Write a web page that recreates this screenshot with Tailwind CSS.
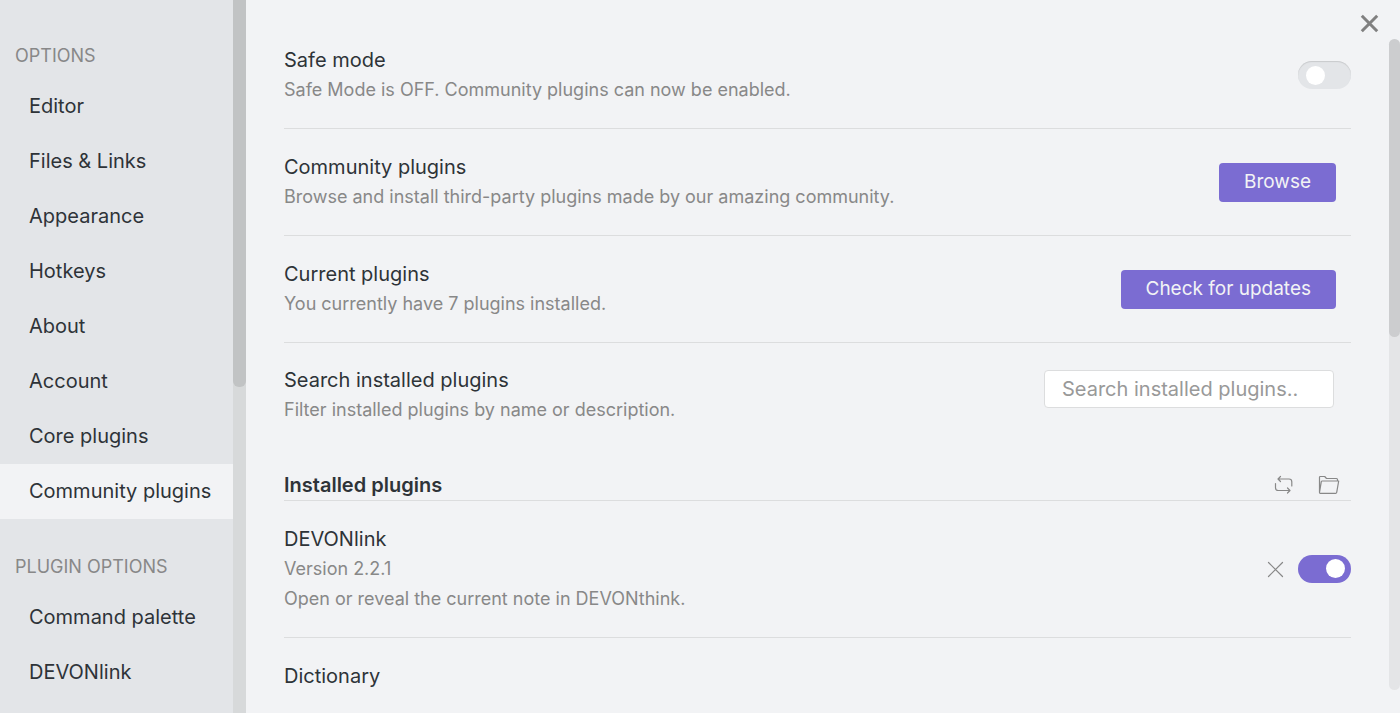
<!DOCTYPE html>
<html lang="en">
<head>
    <meta charset="UTF-8">
    <meta name="viewport" content="width=device-width, initial-scale=1.0">
    <title>Settings - Community plugins</title>
    <script src="https://cdn.jsdelivr.net/npm/@tailwindcss/browser@4"></script>
</head>
<body class="bg-[#f2f3f5] text-[#2e3338] font-[Inter,sans-serif] text-xl">
    <div class="flex h-screen overflow-hidden">
        <!-- Sidebar -->
        <aside class="flex shrink-0 bg-[#e3e5e8]">
            <nav class="w-[233px] pt-[41px] leading-[55px] whitespace-nowrap">
                <h2 class="pl-[15px] text-lg leading-[30px] text-[#888888] mb-2">OPTIONS</h2>
                <a href="#" class="block pl-[29px]">Editor</a>
                <a href="#" class="block pl-[29px]">Files &amp; Links</a>
                <a href="#" class="block pl-[29px]">Appearance</a>
                <a href="#" class="block pl-[29px]">Hotkeys</a>
                <a href="#" class="block pl-[29px]">About</a>
                <a href="#" class="block pl-[29px]">Account</a>
                <a href="#" class="block pl-[29px]">Core plugins</a>
                <a href="#" class="block pl-[29px] bg-[#f2f3f5]" aria-current="page">Community plugins</a>

                <h2 class="pl-[15px] text-lg leading-[30px] text-[#888888] mt-[33px] mb-2">PLUGIN OPTIONS</h2>
                <a href="#" class="block pl-[29px]">Command palette</a>
                <a href="#" class="block pl-[29px]">DEVONlink</a>
            </nav>
            <div class="w-[13px] bg-[#d7d9da]">
                <div class="h-[387px] rounded-b-md bg-[#c1c3c4]"></div>
            </div>
        </aside>

        <!-- Settings -->
        <main class="relative flex flex-1">
            <div class="flex-1 pl-[38px] pr-[38px] pt-[22px] leading-[30px]">
                <div class="flex items-center justify-between py-[23px]">
                    <div>
                        <h3 id="safe-label">Safe mode</h3>
                        <p class="text-lg leading-[30px] text-[#888888]">Safe Mode is OFF. Community plugins can now be enabled.</p>
                    </div>
                    <input type="checkbox" aria-labelledby="safe-label" class="appearance-none w-[53px] h-7 rounded-full bg-[#e3e5e8] shadow-[inset_0_1px_1px_#c8cacc] before:block before:size-[19px] before:rounded-full before:bg-white before:mt-[5px] before:ml-2 checked:bg-[#7b6cd2]">
                </div>

                <div class="flex items-center justify-between py-[23px] border-t border-[#dcddde]">
                    <div>
                        <h3>Community plugins</h3>
                        <p class="text-lg leading-[30px] text-[#888888]">Browse and install third-party plugins made by our amazing community.</p>
                    </div>
                    <button class="mr-[15px] h-[39px] px-[25px] rounded bg-[#7b6cd2] text-[19px] text-[#f2f3f5]">Browse</button>
                </div>

                <div class="flex items-center justify-between py-[23px] border-t border-[#dcddde]">
                    <div>
                        <h3>Current plugins</h3>
                        <p class="text-lg leading-[30px] text-[#888888]">You currently have 7 plugins installed.</p>
                    </div>
                    <button class="mr-[15px] h-[39px] px-[25px] rounded bg-[#7b6cd2] text-[19px] text-[#f2f3f5]">Check for updates</button>
                </div>

                <div class="flex items-start justify-between pt-[22px] border-t border-[#dcddde]">
                    <div>
                        <label for="plugin-search" class="block">Search installed plugins</label>
                        <p class="text-lg leading-[30px] text-[#888888]">Filter installed plugins by name or description.</p>
                    </div>
                    <input id="plugin-search" type="text" placeholder="Search installed plugins.." class="mt-[5px] mr-[17px] w-[290px] h-[38px] px-[17px] rounded border border-[#dcddde] bg-white placeholder:text-[#999999]">
                </div>

                <!-- Installed plugins -->
                <div class="flex items-center justify-between mt-[45px] border-b border-[#dcddde]">
                    <h3 class="font-semibold">Installed plugins</h3>
                    <div class="flex gap-6 pr-[11px] text-[#888888]">
                        <button aria-label="Reload plugins">
                            <svg class="block w-5 h-5" viewBox="0 0 20 20" fill="none" stroke="currentColor" stroke-width="1.2" stroke-linecap="round" stroke-linejoin="round">
                                <path d="M6.500 1.500 4 4l2.500 2.500M4 4h11q2.800 0 2.800 2.800V11M13.500 18l2.500-2.500-2.500-2.500M16 15.500H4.300Q1.500 15.500 1.500 12.700V8.500"/>
                            </svg>
                        </button>
                        <button aria-label="Open plugins folder">
                            <svg class="block w-[22px] h-5" viewBox="0 0 22 20" fill="none" stroke="currentColor" stroke-width="1.2" stroke-linejoin="round">
                                <path d="M1.500 17.500V2.200Q1.500 1.500 2.200 1.500H6.700L8.500 3.500H18.500Q19.500 3.500 19.500 4.500V6M1.500 17.500 3.300 6.700Q3.500 6 4.200 6H20.700L18.700 17.300Q18.500 18.300 17.600 18.300H2.200Q1.500 18.300 1.500 17.500"/>
                            </svg>
                        </button>
                    </div>
                </div>

                <div class="flex items-center justify-between py-[23px]">
                    <div>
                        <h3 id="devonlink-label">DEVONlink</h3>
                        <p class="text-lg leading-[30px] text-[#888888]">Version 2.2.1</p>
                        <p class="text-lg leading-[30px] text-[#888888]">Open or reveal the current note in DEVONthink.</p>
                    </div>
                    <div class="flex items-center gap-[14px]">
                        <button aria-label="Uninstall DEVONlink" class="text-[#888888]">
                            <svg class="block w-[17px] h-[17px]" viewBox="0 0 17 17" fill="none" stroke="currentColor" stroke-width="1.2" stroke-linecap="round">
                                <path d="M1.500 1.500l14 14M15.500 1.500l-14 14"/>
                            </svg>
                        </button>
                        <input type="checkbox" checked aria-labelledby="devonlink-label" class="appearance-none w-[53px] h-7 rounded-full bg-[#e3e5e8] before:block before:size-[19px] before:rounded-full before:bg-white before:mt-1 before:ml-7 checked:bg-[#7b6cd2]">
                    </div>
                </div>

                <div class="py-[23px] border-t border-[#dcddde]">
                    <h3>Dictionary</h3>
                </div>
            </div>

            <!-- Scrollbar -->
            <div class="w-[11px] mt-[39px] mb-[23px] rounded-md bg-[#e4e5e7]">
                <div class="h-[298px] rounded-md bg-[#cccdcf]"></div>
            </div>

            <button aria-label="Close" class="absolute top-3.5 right-[21px] text-[#808080]">
                <svg class="block w-[19px] h-[19px]" viewBox="0 0 19 19" fill="none" stroke="currentColor" stroke-width="3">
                    <path d="M1.800 1.800l15.400 15.400M17.200 1.800 1.800 17.200"/>
                </svg>
            </button>
        </main>
    </div>
</body>
</html>
